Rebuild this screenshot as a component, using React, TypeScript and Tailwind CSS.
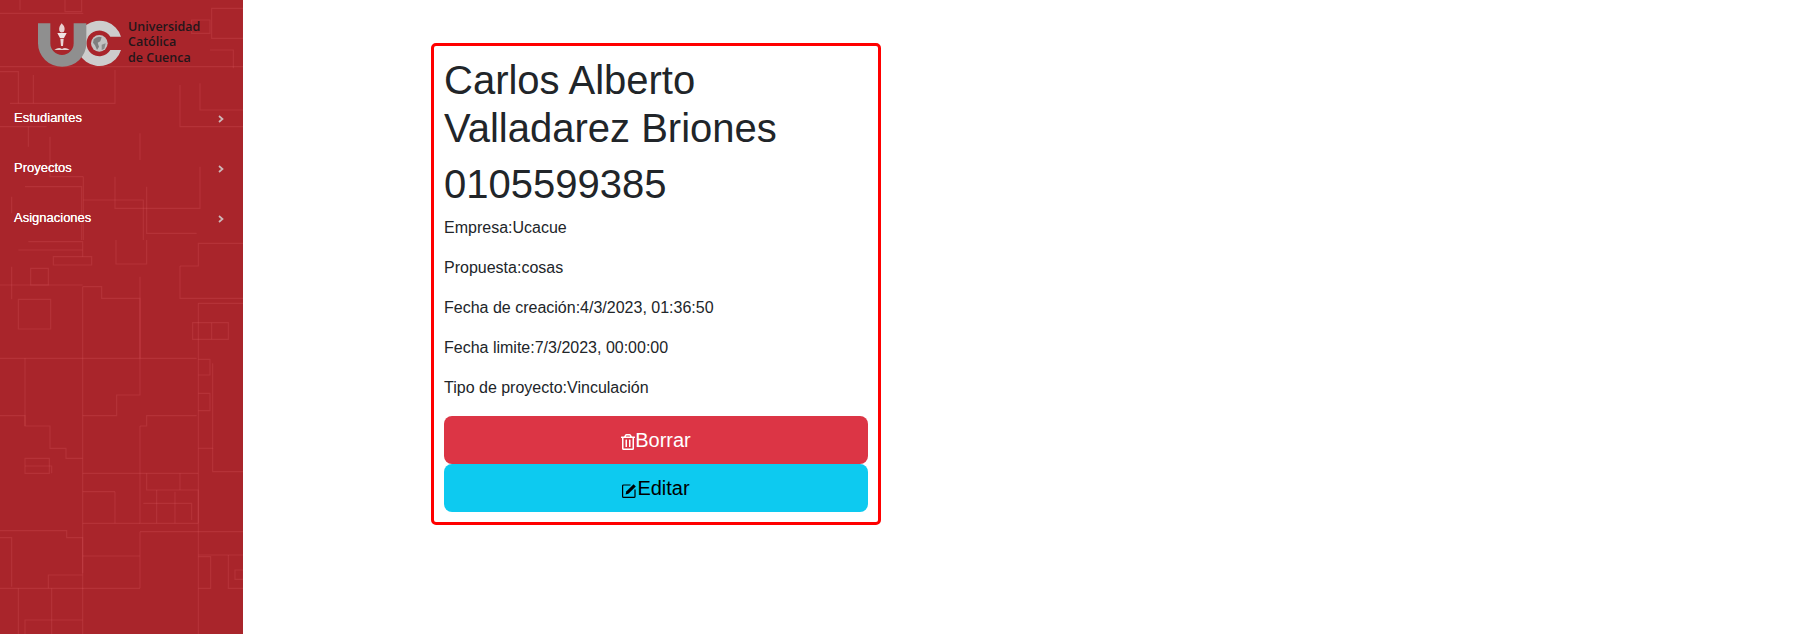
import { FaRegTrashAlt } from 'react-icons/fa';

const menuItems = ['Estudiantes', 'Proyectos', 'Asignaciones'];

const details = [
    ['Empresa', 'Ucacue'],
    ['Propuesta', 'cosas'],
    ['Fecha de creación', '4/3/2023, 01:36:50'],
    ['Fecha limite', '7/3/2023, 00:00:00'],
    ['Tipo de proyecto', 'Vinculación'],
];

const topLines = [
    'M0 40H250', 'M195 0V35H245V0', 'M60 0V30', 'M575 60H630V100H575Z', 'M635 25H730V115H635Z', 'M630 150H700V205',
    'M0 200H730', 'M345 210V310H30', 'M540 255V380H730', 'M0 380H140', 'M85 380V440', 'M150 410V530H250', 'M250 530V720',
    'M345 530V625H600V500', 'M75 560H245V720', 'M420 400V480', 'M440 560V700H590', 'M35 590V640', 'M250 600H430V720',
    'M0 215H55V310', 'M100 225V310', 'M600 250V330H730',
];

const bottomLines = [
    'M0 355H590', 'M248 140V1182', 'M248 140H305V175H420V465H350V527H248', 'M420 110V355', 'M348 0V72H440V0',
    'M0 527H75V558H150V625H198V655H248', 'M75 355V558', 'M55 178H152V267H55Z', 'M92 85H145V135H92Z', 'M35 80V178',
    'M0 135H248', 'M55 30H248', 'M85 5H248V50', 'M160 50H275V75H160Z', 'M540 78H595V10H730', 'M540 78V175H730',
    'M595 190H730', 'M595 190V1182', 'M578 248H685V298H578Z', 'M635 248V298', 'M595 358H630V405H595', 'M595 460H630V512H595',
    'M638 370V695H730', 'M640 625H595', 'M420 558H440V527H590', 'M420 558V850H595', 'M248 700H595', 'M248 850H420',
    'M345 755H248', 'M345 755V850', 'M440 700V750H595V850', 'M540 700V750', 'M470 750V850', 'M525 755V850', 'M430 790H575V840',
    'M75 655H148V700H75Z', 'M75 678H155V700', 'M0 872H200V893H248V1000', 'M0 893H35V1040', 'M248 948H420', 'M248 1045H420',
    'M420 875V1045', 'M420 875H730', 'M0 1045H250', 'M145 1045V1005H248', 'M55 1045V1182', 'M155 1045V1182', 'M75 1182V1140H248',
    'M595 945H730', 'M595 950H632V1045H595', 'M685 945V1045H730', 'M705 990H730V1018H705Z',
];

function SidebarTexture() {
    return (
        <svg className="absolute inset-0 h-full w-full blur-[0.6px]" viewBox="0 0 243 634" preserveAspectRatio="none" aria-hidden="true">
            <g fill="none" stroke="#e86a70" strokeOpacity="0.2" strokeWidth="3.5">
                <g transform="scale(0.3333)">
                    {topLines.map((d) => <path key={d} d={d} />)}
                </g>
                <g transform="translate(0 240) scale(0.3333)">
                    {bottomLines.map((d) => <path key={d} d={d} />)}
                </g>
            </g>
        </svg>
    );
}

function Logo() {
    return (
        <div className="flex items-start">
            <svg width="86" height="48" viewBox="113 60 258 144" aria-hidden="true">
                <path d="M362 110A68 68 0 1 0 362 150H330A38.6 38.6 0 1 1 330 110Z" fill="#cdcdcd" />
                <circle cx="297" cy="130" r="25" fill="#c2c2c2" />
                <path d="M280 118Q292 106 304 112L300 124L292 128L296 140L290 150L284 136L278 128Z" fill="#7e7e7e" />
                <path d="M304 134L316 130L312 146L304 150Z" fill="#8a8a8a" />
                <path d="M113 70H150V130A35 35 0 0 0 220 130V70H258V130A72 70 0 0 1 113 130Z" fill="#8f8f8f" />
                <path d="M184 70Q174 82 177 92Q180 100 190 96Q198 84 184 70Z" fill="#e9cfcf" />
                <path d="M171 99H199L191 114H179Z" fill="#f0e4e4" />
                <path d="M180 116H190L188 138H182Z" fill="#e9d6d6" />
                <path d="M162 150Q175 140 185 147Q195 140 208 150Z" fill="#e4d2d2" />
            </svg>
            <p className="mt-[-1px] ml-[4px] font-['Open_Sans',sans-serif] text-[12.5px] leading-[15.3px] font-semibold text-[#24161a]">
                Universidad<br />Católica<br />de Cuenca
            </p>
        </div>
    );
}

function EditIcon() {
    return (
        <svg width="15" height="15" viewBox="0 0 15 15" className="mt-[5px]" aria-hidden="true">
            <path d="M8.5 2H1.6a1 1 0 0 0-1 1v10.4a1 1 0 0 0 1 1H12a1 1 0 0 0 1-1V6.5" fill="none" stroke="currentColor" strokeWidth="1.2" />
            <path d="M3.6 11.4L4.2 8.6L11.6 1.2L13.8 3.4L6.4 10.8Z" fill="currentColor" />
        </svg>
    );
}

export default function App() {
    return (
        <div className="flex h-screen overflow-hidden bg-white font-['Liberation_Sans',Arial,sans-serif] text-[#212529]">
            <aside className="relative h-screen w-[243px] shrink-0 overflow-hidden bg-[#a9252b]">
                <SidebarTexture />
                <div className="relative">
                    <div className="ml-[38px] pt-[20px] pb-[25px]">
                        <Logo />
                    </div>
                    <ul>
                        {menuItems.map((item) => (
                            <li key={item} className="flex h-[50px] items-center justify-between pr-[19px] pl-[14px] text-[13px] text-white [text-shadow:0_0_0.5px_#ffffff]">
                                <span>{item}</span>
                                <svg width="6" height="8" viewBox="0 0 6 8" className="mt-[2px]" aria-hidden="true">
                                    <path d="M1 1L4.5 4L1 7" fill="none" stroke="#cdb8b9" strokeWidth="1.7" />
                                </svg>
                            </li>
                        ))}
                    </ul>
                </div>
            </aside>

            <main className="min-w-0 flex-1 pt-[43px] pl-[188px]">
                <section className="w-[450px] rounded-[5px] border-[3px] border-[#ff0000] p-[10px]">
                    <h2 className="mb-2 text-[40px] leading-[48px]">Carlos Alberto Valladarez Briones</h2>
                    <h2 className="mb-2 text-[40px] leading-[48px]">0105599385</h2>
                    {details.map(([label, value]) => (
                        <p key={label} className="mb-4 text-base leading-6">{label}:{value}</p>
                    ))}
                    <button type="button" className="flex h-12 w-full items-center justify-center rounded-lg bg-[#dc3545] text-xl text-white">
                        <FaRegTrashAlt className="mt-[3px] h-4 w-[14px]" />
                        Borrar
                    </button>
                    <button type="button" className="flex h-12 w-full items-center justify-center rounded-lg bg-[#0dcaf0] text-xl text-black">
                        <EditIcon />
                        Editar
                    </button>
                </section>
            </main>
        </div>
    );
}
